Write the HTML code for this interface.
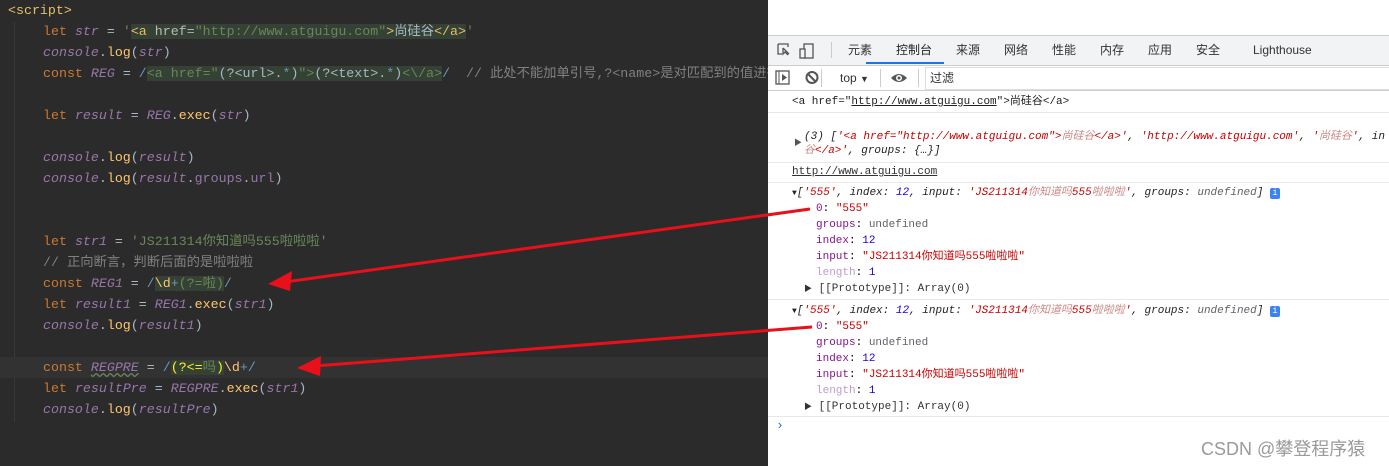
<!DOCTYPE html>
<html><head><meta charset="utf-8"><style>
*{margin:0;padding:0;box-sizing:border-box}
body{width:1389px;height:466px;overflow:hidden;position:relative;background:#fff;font-family:"Liberation Sans","Noto Sans CJK SC",sans-serif}
#ed{position:absolute;left:0;top:0;width:768px;height:466px;background:#2b2b2b;font-family:"Liberation Mono","Noto Sans CJK SC",monospace;font-size:13.3px;color:#a9b7c6}
.l{position:absolute;left:43px;height:21px;line-height:21px;white-space:pre}
.k{color:#cc7832}.v{color:#9876aa;font-style:italic}.s{color:#6a8759}.c{color:#808080}.f{color:#ffc66d}
.hl{background:#344134}
.i{color:#9876aa;font-style:italic}
#dv{position:absolute;left:768px;top:0;width:621px;height:466px;background:#fff;font-family:"Liberation Mono","Noto Sans CJK SC",monospace;font-size:11px}
.r{position:absolute;left:24px;white-space:pre;line-height:16px}
.hr{position:absolute;left:0;right:0;height:1px;background:#e8e8e8}
.red{color:#c80000}.pu{color:#881391}.bl{color:#1c00cf}.g{color:#5f6368}.it{font-style:italic}
.tab{position:absolute;top:36px;height:29px;line-height:29px;font-size:12px;color:#333;font-family:"Liberation Sans","Noto Sans CJK SC",sans-serif}
</style></head><body>
<div id="ed">
<div style="position:absolute;left:14px;top:22px;width:1px;height:400px;background:#393939"></div>
<div style="position:absolute;left:0;top:357px;width:768px;height:21px;background:#323232"></div>
<div class="l" style="left:8px;top:0px;color:#e8bf6a">&lt;script&gt;</div>
<div class="l" style="top:21px"><span class="k">let</span> <span class="v">str</span> = <span class="s">'</span><span class="hl"><span style="color:#e8bf6a">&lt;a </span><span style="color:#bababa">href</span>=<span class="s">"http://www.atguigu.com"</span><span style="color:#e8bf6a">&gt;</span>尚硅谷<span style="color:#e8bf6a">&lt;/a&gt;</span></span><span class="s">'</span></div>
<div class="l" style="top:42px"><span class="i">console</span>.<span class="f">log</span>(<span class="v">str</span>)</div>
<div class="l" style="top:63px"><span class="k">const</span> <span class="v">REG</span> = <span style="color:#6897bb">/</span><span class="hl"><span class="s">&lt;a href="</span>(?&lt;url&gt;.<span style="color:#6897bb">*</span>)<span class="s">"&gt;</span>(?&lt;text&gt;.<span style="color:#6897bb">*</span>)<span class="s">&lt;\/a&gt;</span></span><span style="color:#6897bb">/</span>  <span class="c">// 此处不能加单引号,?&lt;name&gt;是对匹配到的值进行</span></div>
<div class="l" style="top:105px"><span class="k">let</span> <span class="v">result</span> = <span class="v">REG</span>.<span class="f">exec</span>(<span class="v">str</span>)</div>
<div class="l" style="top:147px"><span class="i">console</span>.<span class="f">log</span>(<span class="v">result</span>)</div>
<div class="l" style="top:168px"><span class="i">console</span>.<span class="f">log</span>(<span class="v">result</span>.<span class="v" style="font-style:normal">groups</span>.<span class="v" style="font-style:normal">url</span>)</div>
<div class="l" style="top:231px"><span class="k">let</span> <span class="v">str1</span> = <span class="s">'JS211314你知道吗555啦啦啦'</span></div>
<div class="l" style="top:252px"><span class="c">// 正向断言，判断后面的是啦啦啦</span></div>
<div class="l" style="top:273px"><span class="k">const</span> <span class="v">REG1</span> = <span style="color:#6897bb">/</span><span class="hl"><span class="f">\d</span><span style="color:#6897bb">+</span><span class="s">(?=啦)</span></span><span style="color:#6897bb">/</span></div>
<div class="l" style="top:294px"><span class="k">let</span> <span class="v">result1</span> = <span class="v">REG1</span>.<span class="f">exec</span>(<span class="v">str1</span>)</div>
<div class="l" style="top:315px"><span class="i">console</span>.<span class="f">log</span>(<span class="v">result1</span>)</div>
<div class="l" style="top:357px"><span class="k">const</span> <span class="v" style="text-decoration:underline wavy #6a8759">REGPRE</span> = <span style="color:#6897bb">/</span><span class="hl"><span style="color:#ffef28">(?&lt;=</span><span class="s">吗</span><span style="color:#ffef28">)</span></span><span class="f">\d</span><span style="color:#6897bb">+/</span></div>
<div class="l" style="top:378px"><span class="k">let</span> <span class="v">resultPre</span> = <span class="v">REGPRE</span>.<span class="f">exec</span>(<span class="v">str1</span>)</div>
<div class="l" style="top:399px"><span class="i">console</span>.<span class="f">log</span>(<span class="v">resultPre</span>)</div>
</div>
<div id="dv">
<div style="position:absolute;left:0;top:35px;width:621px;height:31px;background:#f1f3f4;border-top:1px solid #cbcdd1;border-bottom:1px solid #cbcdd1"></div>
<svg style="position:absolute;left:8px;top:41px" width="40" height="20"><path d="M2 3h10v3M2 3v10h4" stroke="#555" fill="none" stroke-width="1.3"/><path d="M7 7l6 6M7 7v6l2-2 3 3" stroke="#555" fill="none" stroke-width="1.3"/><rect x="28" y="3" width="9" height="14" stroke="#555" fill="none" stroke-width="1.3"/><rect x="24" y="8" width="5" height="9" stroke="#555" fill="#f1f3f4" stroke-width="1.3"/></svg>
<div style="position:absolute;left:63px;top:42px;width:1px;height:16px;background:#ccc"></div>
<div class="tab" style="left:80px">元素</div>
<div class="tab" style="left:128px;color:#202124">控制台</div>
<div style="position:absolute;left:98px;top:62px;width:78px;height:2px;background:#1a73e8"></div>
<div class="tab" style="left:188px">来源</div>
<div class="tab" style="left:236px">网络</div>
<div class="tab" style="left:284px">性能</div>
<div class="tab" style="left:332px">内存</div>
<div class="tab" style="left:380px">应用</div>
<div class="tab" style="left:428px">安全</div>
<div class="tab" style="left:485px">Lighthouse</div>
<div style="position:absolute;left:157px;top:67px;width:464px;height:23px;background:#fff;border:1px solid #ddd;border-right:none;font-size:12px;line-height:21px;padding-left:4px;font-family:'Liberation Sans','Noto Sans CJK SC',sans-serif;color:#333">过滤</div>
<svg style="position:absolute;left:6px;top:69px" width="140" height="18"><rect x="2" y="2" width="13" height="13" stroke="#555" fill="none" stroke-width="1.3"/><path d="M5 2v13" stroke="#555"/><path d="M8 5l5 3.5-5 3.5z" fill="#555"/><circle cx="38" cy="8.5" r="5.5" stroke="#555" fill="none" stroke-width="2"/><path d="M34 5l8 8" stroke="#555" stroke-width="2"/></svg>
<div style="position:absolute;left:53px;top:69px;width:1px;height:18px;background:#ccc"></div>
<div style="position:absolute;left:72px;top:69px;font-size:12px;font-family:'Liberation Sans',sans-serif;color:#333;line-height:18px">top <span style="font-size:9px">▼</span></div>
<div style="position:absolute;left:112px;top:69px;width:1px;height:18px;background:#ccc"></div>
<svg style="position:absolute;left:122px;top:70px" width="20" height="16"><path d="M1 8Q9 0 17 8Q9 16 1 8z" fill="#555"/><circle cx="9" cy="8" r="3" fill="#fff"/><circle cx="9" cy="8" r="1.5" fill="#555"/></svg>
<div style="position:absolute;left:150px;top:69px;width:1px;height:18px;background:#ccc"></div>
<div class="hr" style="top:90px;background:#cbcdd1"></div>
<div class="r" style="top:94px;color:#222">&lt;a href="<span style="text-decoration:underline">http://www.atguigu.com</span>"&gt;尚硅谷&lt;/a&gt;</div>
<div class="hr" style="top:112px"></div>
<div class="r it" style="top:129px;left:36px;color:#222">(3) [<span class="red">'&lt;a href="http://www.atguigu.com"&gt;<span style="color:#c88">尚硅谷</span>&lt;/a&gt;'</span>, <span class="red">'http://www.atguigu.com'</span>, <span class="red">'<span style="color:#c88">尚硅谷</span>'</span>, in</div>
<div class="r it" style="top:143px;left:36px;color:#222"><span class="red"><span style="color:#c88">谷</span>&lt;/a&gt;'</span>, groups: {…}]</div>
<div style="position:absolute;left:26px;top:137px;font-size:8px;color:#555">▶</div>
<div class="hr" style="top:162px"></div>
<div class="r" style="top:164px;color:#333;text-decoration:underline">http://www.atguigu.com</div>
<div class="hr" style="top:182px"></div>
<div style="position:absolute;left:0;top:185px;width:621px">
<div class="r it" style="top:0;left:24px;color:#222"><span style="font-size:8px;font-style:normal">▼</span>[<span class="red">'555'</span>, index: <span class="bl">12</span>, input: <span class="red">'JS211314<span style="color:#c88">你知道吗</span>555<span style="color:#c88">啦啦啦</span>'</span>, groups: <span class="g">undefined</span>] <span style="display:inline-block;width:10px;height:11px;background:#3b82f6;color:#fff;font-size:9px;line-height:11px;text-align:center;border-radius:2px;font-style:normal">i</span></div>
<div class="r" style="top:16px;left:48px"><span class="pu">0</span>: <span class="red">"555"</span></div>
<div class="r" style="top:32px;left:48px"><span class="pu">groups</span>: <span class="g">undefined</span></div>
<div class="r" style="top:48px;left:48px"><span class="pu">index</span>: <span class="bl">12</span></div>
<div class="r" style="top:64px;left:48px"><span class="pu">input</span>: <span class="red">"JS211314你知道吗555啦啦啦"</span></div>
<div class="r" style="top:80px;left:48px"><span style="color:#c39bd3">length</span>: <span class="bl">1</span></div>
<div class="r" style="top:96px;left:36px;color:#333"><span style="font-size:8px">▶</span> [[Prototype]]: Array(0)</div>
</div>
<div class="hr" style="top:299px"></div>
<div style="position:absolute;left:0;top:303px;width:621px">
<div class="r it" style="top:0;left:24px;color:#222"><span style="font-size:8px;font-style:normal">▼</span>[<span class="red">'555'</span>, index: <span class="bl">12</span>, input: <span class="red">'JS211314<span style="color:#c88">你知道吗</span>555<span style="color:#c88">啦啦啦</span>'</span>, groups: <span class="g">undefined</span>] <span style="display:inline-block;width:10px;height:11px;background:#3b82f6;color:#fff;font-size:9px;line-height:11px;text-align:center;border-radius:2px;font-style:normal">i</span></div>
<div class="r" style="top:16px;left:48px"><span class="pu">0</span>: <span class="red">"555"</span></div>
<div class="r" style="top:32px;left:48px"><span class="pu">groups</span>: <span class="g">undefined</span></div>
<div class="r" style="top:48px;left:48px"><span class="pu">index</span>: <span class="bl">12</span></div>
<div class="r" style="top:64px;left:48px"><span class="pu">input</span>: <span class="red">"JS211314你知道吗555啦啦啦"</span></div>
<div class="r" style="top:80px;left:48px"><span style="color:#c39bd3">length</span>: <span class="bl">1</span></div>
<div class="r" style="top:96px;left:36px;color:#333"><span style="font-size:8px">▶</span> [[Prototype]]: Array(0)</div>
</div>
<div class="hr" style="top:416px"></div>
<div style="position:absolute;left:8px;top:418px;color:#1a73e8;font-size:13px">›</div>
<div style="position:absolute;left:433px;top:435px;font-size:18px;color:#9a9a9a;font-family:'Liberation Sans','Noto Sans CJK SC',sans-serif">CSDN @攀登程序猿</div>
</div>
<svg style="position:absolute;left:0;top:0" width="1389" height="466">
<path d="M810 209L285 282" stroke="#e8101a" stroke-width="3"/>
<path d="M268 284L292 271L290 291z" fill="#e8101a"/>
<path d="M812 327L315 366" stroke="#e8101a" stroke-width="3"/>
<path d="M297 368L321 356L320 376z" fill="#e8101a"/>
</svg>
</body></html>
